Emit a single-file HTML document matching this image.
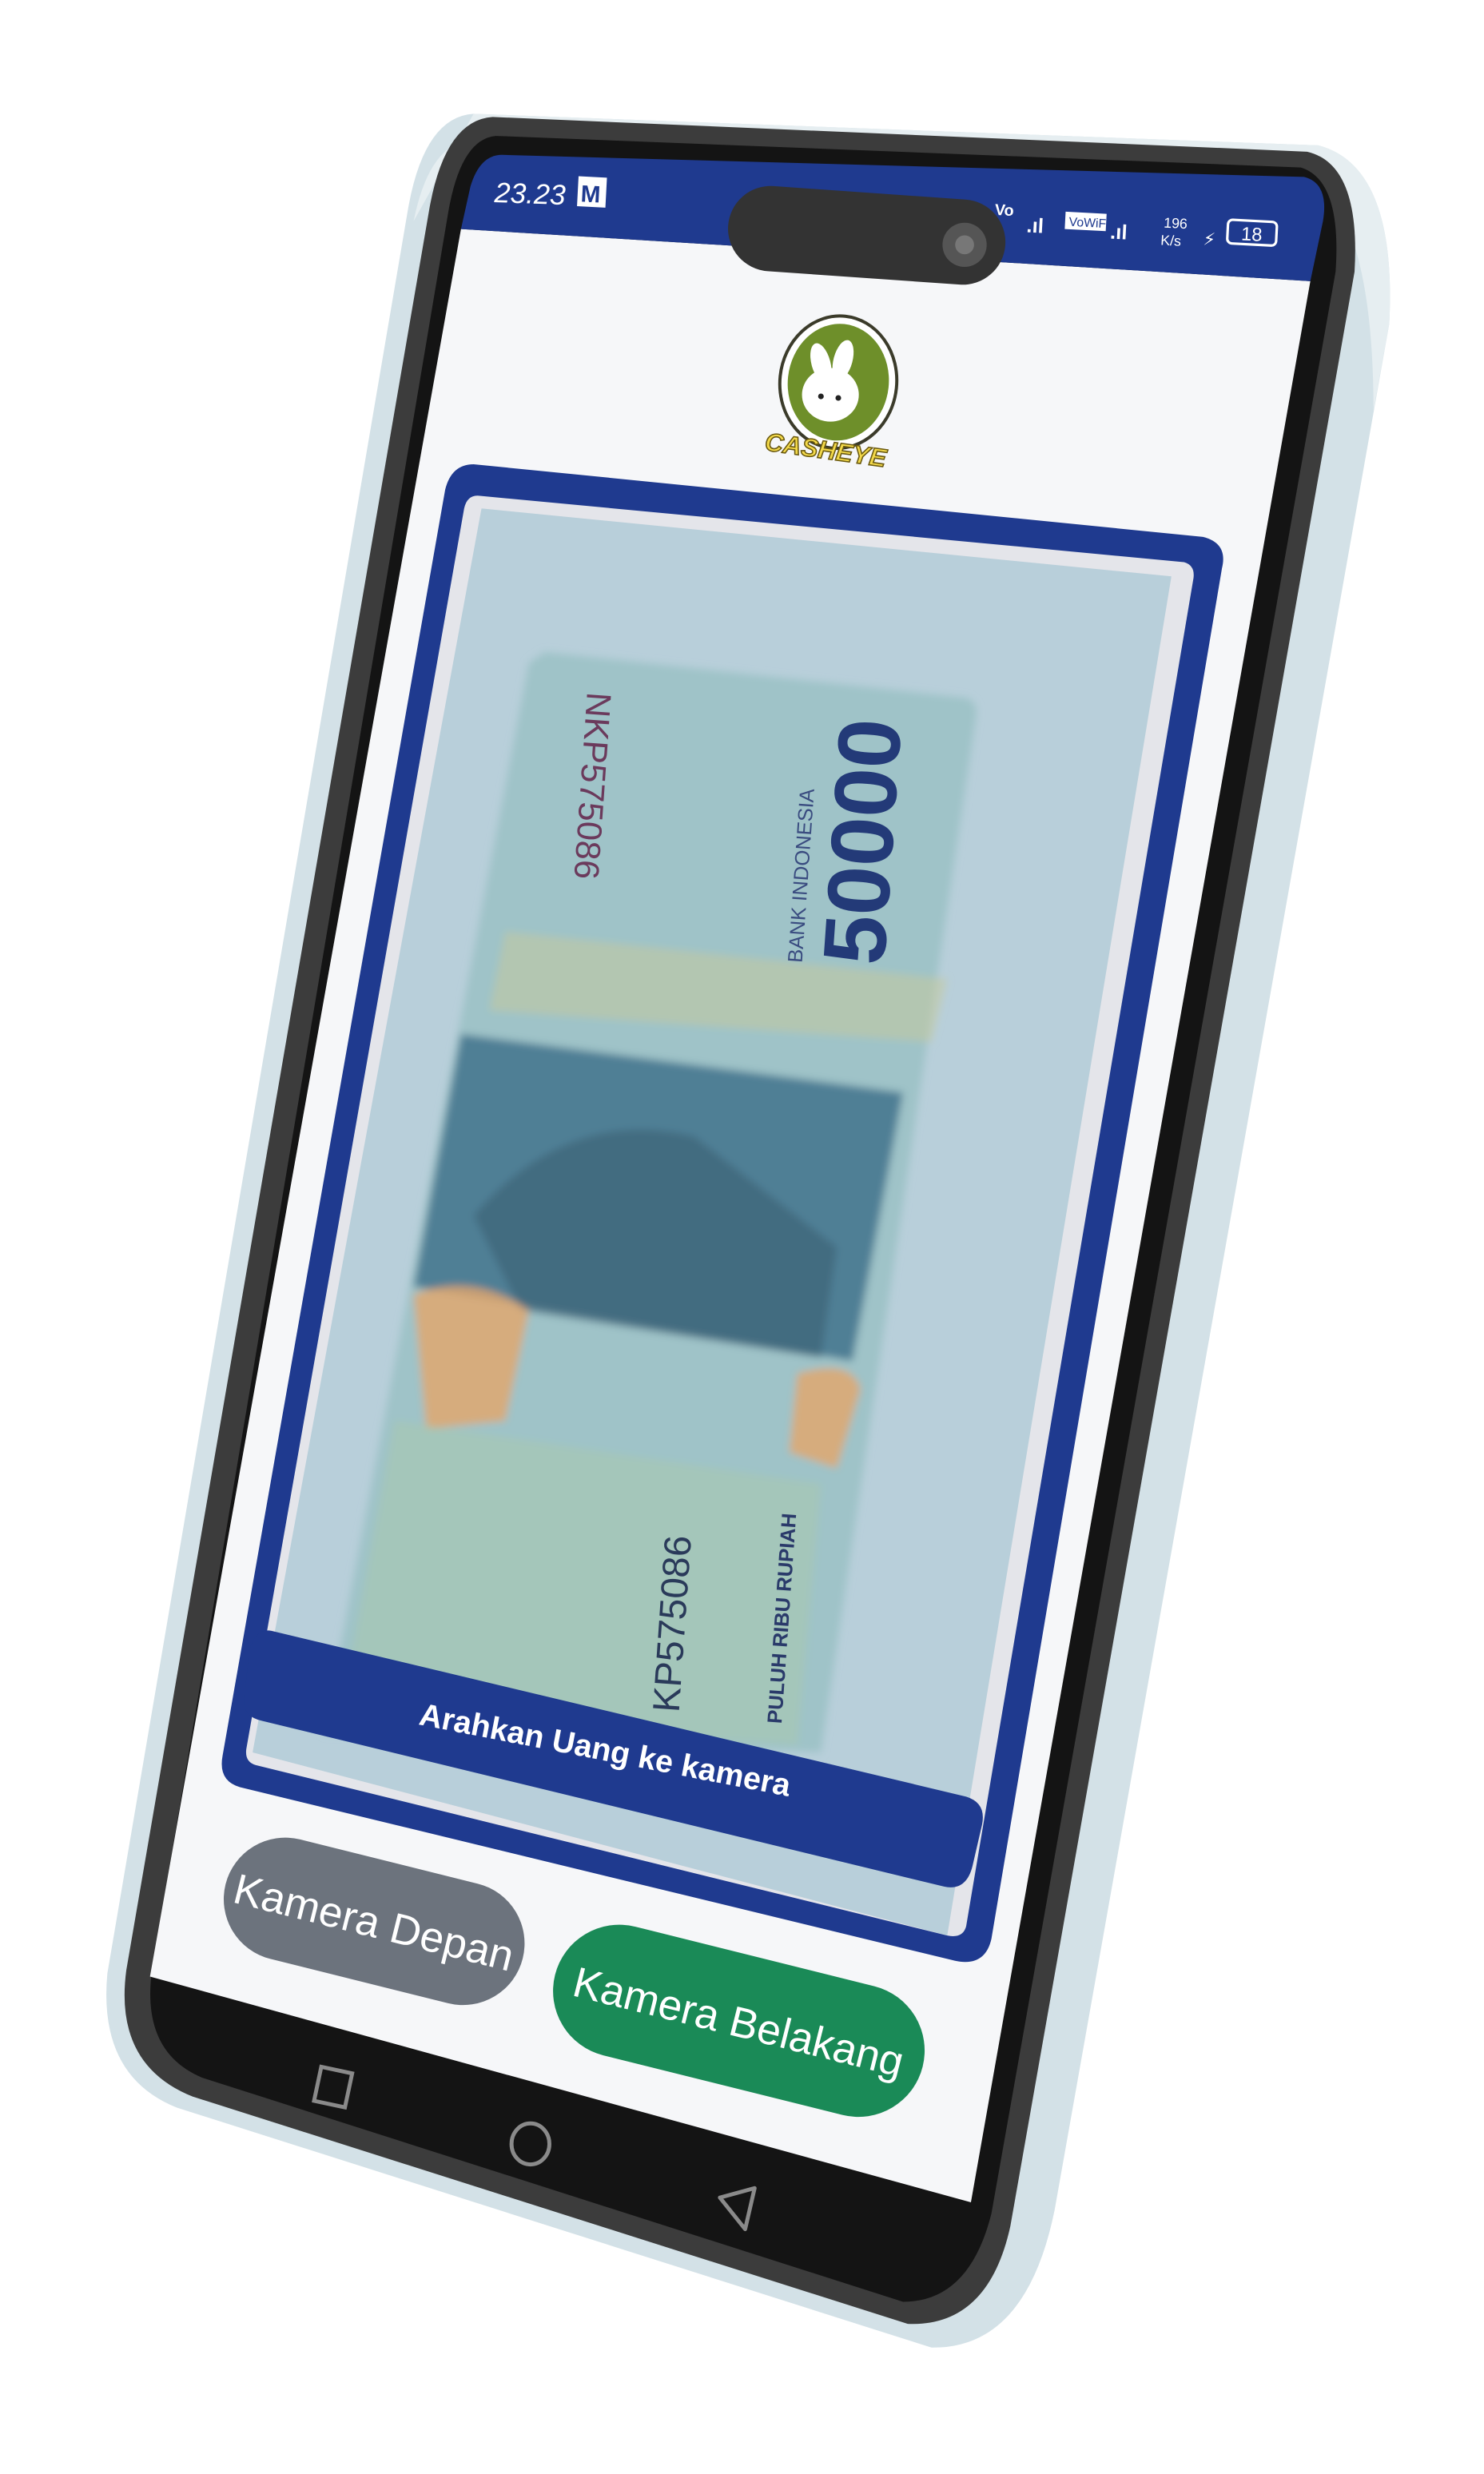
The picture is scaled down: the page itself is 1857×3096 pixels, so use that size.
<!DOCTYPE html>
<html><head><meta charset="utf-8">
<style>
html,body{margin:0;padding:0;background:#fff;}
svg{display:block;}
text{font-family:"Liberation Sans","DejaVu Sans",sans-serif;}
</style></head>
<body>
<svg width="1857" height="3096" viewBox="0 0 940 1567" xmlns="http://www.w3.org/2000/svg">
<defs>
<clipPath id="photo"><path d="M305,322 L742,365 L600,1226 L160,1110 Z"/></clipPath>
<filter id="bl" x="-10%" y="-10%" width="120%" height="120%"><feGaussianBlur stdDeviation="2.5"/></filter>
</defs>
<path d="M300,72 L835,92 Q885,105 880,205 L668,1400 Q650,1488 590,1487 L112,1335 Q62,1315 68,1250 L258,135 Q268,74 300,72 Z" fill="#d3e1e7"/>
<path d="M300,72 L835,92 Q885,105 880,205 L870,260 Q870,140 830,110 L300,88 Q272,90 262,140 Z" fill="#e6eef1"/>
<path d="M312,74 L828,96 Q862,104 858,172 L640,1410 Q626,1474 575,1472 L122,1328 Q72,1308 80,1248 L272,132 Q282,76 312,74 Z" fill="#3c3c3c"/>
<path d="M314,86 L824,106 Q850,114 846,172 L628,1402 Q614,1458 572,1458 L128,1316 Q90,1300 96,1250 L284,134 Q292,88 314,86 Z" fill="#141414"/>
<path d="M292,145 L830,178 L615,1395 L95,1252 Z" fill="#f6f7f9"/>
<path d="M318,98 L826,112 Q842,116 838,140 L830,178 L292,145 L298,118 Q304,98 318,98 Z" fill="#1f3a8f"/>
<text x="313" y="128" fill="#fff" font-size="18" font-style="italic" transform="rotate(2 313 128)">23.23</text>
<rect x="366" y="112" width="18" height="19" fill="#fff" transform="rotate(3 375 121)"/>
<text x="368" y="128" fill="#1f3a8f" font-size="15" font-weight="bold" transform="rotate(3 375 121)">M</text>
<text x="630" y="136" fill="#fff" font-size="10" font-weight="bold" transform="rotate(3 630 136)">Vo</text>
<text x="650" y="147" fill="#fff" font-size="13" font-weight="bold" transform="rotate(3 650 147)">.ıl</text>
<rect x="675" y="134" width="26" height="11" fill="#fff" transform="rotate(3 675 134)"/>
<text x="677" y="143" fill="#1f3a8f" font-size="8" transform="rotate(3 677 143)">VoWiFi</text>
<text x="703" y="151" fill="#fff" font-size="13" font-weight="bold" transform="rotate(3 703 151)">.ıl</text>
<text x="737" y="144" fill="#fff" font-size="9" transform="rotate(3 737 144)">196</text>
<text x="735" y="155" fill="#fff" font-size="9" transform="rotate(3 735 155)">K/s</text>
<text x="762" y="155" fill="#fff" font-size="11" font-style="italic" transform="rotate(3 762 155)">⚡</text>
<rect x="778" y="139" width="31" height="15" rx="3" fill="none" stroke="#fff" stroke-width="1.6" transform="rotate(3 778 139)"/>
<text x="786" y="152" fill="#fff" font-size="12" transform="rotate(3 786 152)">18</text>
<rect x="461" y="122" width="176" height="54" rx="27" fill="#333" transform="rotate(4 549 149)"/>
<circle cx="611" cy="155" r="14" fill="#555"/><circle cx="611" cy="155" r="6" fill="#777"/>
<ellipse cx="531" cy="242" rx="37" ry="42" fill="#fff" stroke="#3b3b2a" stroke-width="2" transform="rotate(6 531 242)"/>
<ellipse cx="531" cy="242" rx="32" ry="37" fill="#6e8f2a" transform="rotate(6 531 242)"/>
<ellipse cx="526" cy="250" rx="18" ry="17" fill="#fff"/>
<ellipse cx="520" cy="230" rx="6" ry="13" fill="#fff" transform="rotate(-15 520 230)"/>
<ellipse cx="534" cy="228" rx="6" ry="13" fill="#fff" transform="rotate(15 534 228)"/>
<circle cx="520" cy="251" r="1.8" fill="#222"/><circle cx="531" cy="252" r="1.8" fill="#222"/>
<text x="484" y="285" fill="#f3d94a" stroke="#6b5a10" stroke-width="0.8" font-size="16" font-weight="bold" font-style="italic" transform="rotate(8 484 285)">CASHEYE</text>
<path d="M300,294 L762,340 Q778,344 774,360 L628,1228 Q624,1246 605,1242 L152,1132 Q138,1128 141,1112 L282,310 Q286,294 300,294 Z" fill="#1f3a8f"/>
<path d="M304,314 L750,356 Q757,358 756,366 L612,1220 Q610,1228 600,1226 L162,1118 Q155,1116 156,1108 L294,322 Q296,313 304,314 Z" fill="#e4e5ea"/>
<g clip-path="url(#photo)">
<rect x="100" y="280" width="700" height="1000" fill="#b8cfda"/>
<g filter="url(#bl)">
<path d="M345,413 L612,442 Q620,445 618,455 L520,1110 L205,1098 L335,420 Z" fill="#9fc3c8"/>
<path d="M292,655 L572,692 L540,862 L262,815 Z" fill="#4f7f95"/>
<path d="M300,770 Q360,700 440,720 L530,790 L520,860 L330,830 Z" fill="#3f6478" opacity="0.7"/>
<path d="M262,820 Q300,805 335,830 L320,900 L270,905 Z" fill="#e3a66a" opacity="0.8"/>
<path d="M505,870 Q540,860 545,880 L530,930 L500,920 Z" fill="#e3a66a" opacity="0.8"/>
<path d="M250,900 L520,940 L505,1105 L215,1090 Z" fill="#a9c8b0" opacity="0.6"/>
<path d="M320,590 L600,620 L590,660 L310,640 Z" fill="#c8c99a" opacity="0.5"/>
</g>
<text x="560" y="612" fill="#233a78" font-size="56" font-weight="bold" transform="rotate(-86 560 612)">50000</text>
<text x="508" y="610" fill="#3a4c80" font-size="13" transform="rotate(-86 508 610)">BANK INDONESIA</text>
<text x="372" y="438" fill="#6b3a5c" font-size="22" transform="rotate(94 372 438)">NKP575086</text>
<text x="430" y="1085" fill="#2a3a5a" font-size="24" transform="rotate(-86 430 1085)">KP575086</text>
<text x="495" y="1092" fill="#2a3a6a" font-size="13" font-weight="bold" transform="rotate(-86 495 1092)">PULUH RIBU RUPIAH</text>
</g>
<path d="M172,1033 L612,1138 Q625,1142 622,1156 L616,1182 Q612,1198 598,1195 L166,1090 Q152,1087 155,1073 L158,1045 Q162,1031 172,1033 Z" fill="#1f3a8f"/>
<text x="382" y="1115" fill="#fff" font-size="20" font-weight="bold" text-anchor="middle" transform="rotate(11 382 1115)">Arahkan Uang ke kamera</text>
<g transform="rotate(14 237 1217)">
<rect x="140" y="1178" width="194" height="78" rx="39" fill="#6c737d"/>
<text x="237" y="1227" fill="#fff" font-size="27" text-anchor="middle">Kamera Depan</text>
</g>
<g transform="rotate(14 468 1280)">
<rect x="348" y="1238" width="240" height="84" rx="42" fill="#1a8a57"/>
<text x="468" y="1290" fill="#fff" font-size="27" text-anchor="middle">Kamera Belakang</text>
</g>
<rect x="201" y="1311" width="20" height="22" fill="none" stroke="#8a8a8a" stroke-width="2.5" transform="rotate(12 211 1322)"/>
<ellipse cx="336" cy="1358" rx="12" ry="13" fill="none" stroke="#8a8a8a" stroke-width="2.5"/>
<path d="M478,1386 L472,1412 L456,1392 Z" fill="none" stroke="#8a8a8a" stroke-width="2.5" stroke-linejoin="round"/>
</svg>
</body></html>
